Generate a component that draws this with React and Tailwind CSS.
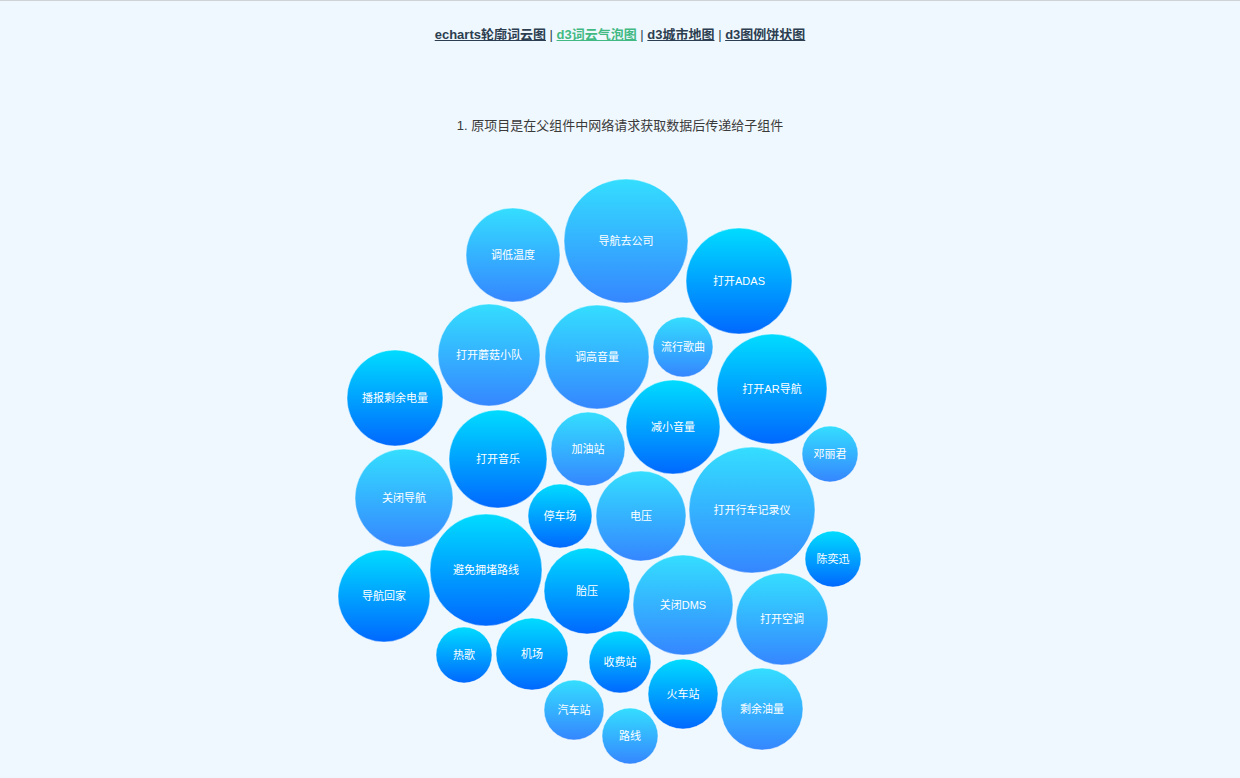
import React from "react";

const bubbles = [
  ["导航去公司", 626, 241, 62, "A"],
  ["调低温度", 513, 255, 47, "A"],
  ["打开ADAS", 739, 281, 53, "B"],
  ["打开蘑菇小队", 489, 355, 51, "A"],
  ["调高音量", 597, 357, 52, "A"],
  ["流行歌曲", 683, 347, 30, "A"],
  ["打开AR导航", 772, 389, 55, "B"],
  ["播报剩余电量", 395, 398, 48, "B"],
  ["打开音乐", 498, 459, 49, "B"],
  ["加油站", 588, 449, 37, "A"],
  ["减小音量", 673, 427, 47, "B"],
  ["邓丽君", 830, 454, 28, "A"],
  ["关闭导航", 404, 498, 49, "A"],
  ["停车场", 560, 516, 32, "B"],
  ["电压", 641, 516, 45, "A"],
  ["打开行车记录仪", 752, 510, 63, "A"],
  ["陈奕迅", 833, 559, 28, "B"],
  ["避免拥堵路线", 486, 570, 56, "B"],
  ["导航回家", 384, 596, 46, "B"],
  ["胎压", 587, 591, 43, "B"],
  ["关闭DMS", 683, 605, 50, "A"],
  ["打开空调", 782, 619, 46, "A"],
  ["热歌", 464, 655, 28, "B"],
  ["机场", 532, 654, 36, "B"],
  ["收费站", 620, 662, 31, "B"],
  ["火车站", 683, 694, 35, "B"],
  ["剩余油量", 762, 709, 41, "A"],
  ["汽车站", 574, 710, 30, "A"],
  ["路线", 630, 736, 28, "A"],
];

const TOP = 150;

export default function App() {
  return (
    <div
      className="min-h-screen bg-[#f0f8ff] border-t border-[#d0d3d6] text-[#2c3e50] overflow-hidden"
      style={{ fontFamily: '"Liberation Sans", "Noto Sans CJK SC", sans-serif' }}
    >
      <nav className="pt-[25px] text-center text-[13px] leading-[18px]">
        <a className="font-bold underline text-[#2c3e50]">echarts轮廓词云图</a>
        <span className="text-[#2c3e50]"> | </span>
        <a className="font-bold underline text-[#42b983]">d3词云气泡图</a>
        <span className="text-[#2c3e50]"> | </span>
        <a className="font-bold underline text-[#2c3e50]">d3城市地图</a>
        <span className="text-[#2c3e50]"> | </span>
        <a className="font-bold underline text-[#2c3e50]">d3图例饼状图</a>
      </nav>
      <p className="mt-[73px] text-center text-[13px] leading-[18px] text-[#3a3a3a]">
        1. 原项目是在父组件中网络请求获取数据后传递给子组件
      </p>
      <svg className="block mt-[15px]" width="1240" height={778 - TOP} viewBox={`0 ${TOP} 1240 ${778 - TOP}`}>
        <defs>
          <linearGradient id="gA" x1="0" y1="0" x2="0" y2="1">
            <stop offset="0%" stopColor="#34deff" />
            <stop offset="100%" stopColor="#3586ff" />
          </linearGradient>
          <linearGradient id="gB" x1="0" y1="0" x2="0" y2="1">
            <stop offset="0%" stopColor="#00dcff" />
            <stop offset="100%" stopColor="#0068ff" />
          </linearGradient>
        </defs>
        {bubbles.map(([t, x, y, r, g]) => (
          <g key={t}>
            <circle cx={x} cy={y} r={r} fill={`url(#g${g})`} stroke="#ffffff" strokeOpacity="0.45" strokeWidth="1" />
            <text
              x={x}
              y={y}
              textAnchor="middle"
              dominantBaseline="central"
              fill="#ffffff"
              fontSize="11"
              style={{ fontFamily: '"Liberation Sans", "Noto Sans CJK SC", sans-serif' }}
            >
              {t}
            </text>
          </g>
        ))}
      </svg>
    </div>
  );
}
